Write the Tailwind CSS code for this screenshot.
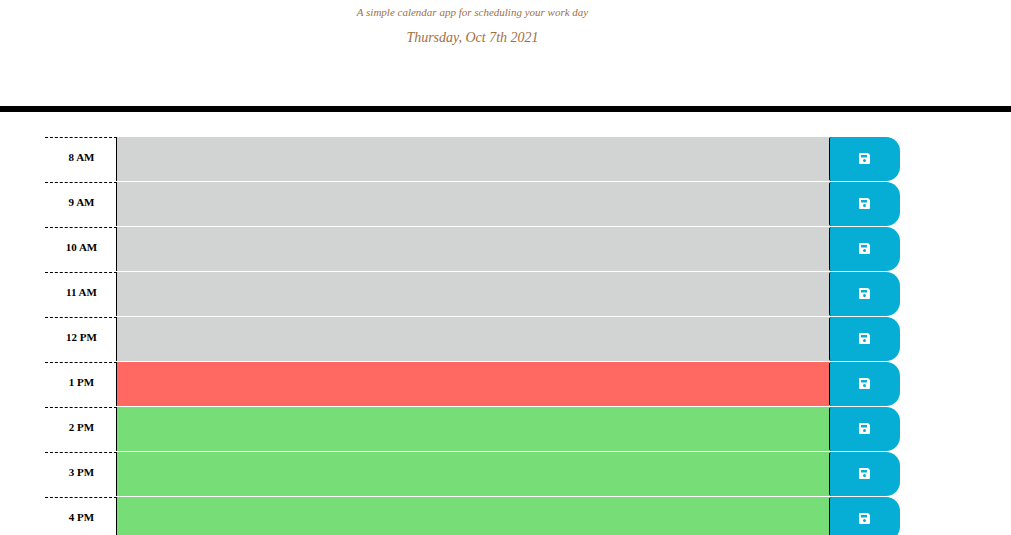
<!DOCTYPE html>
<html lang="en">
<head>
<meta charset="utf-8">
<meta name="viewport" content="width=device-width, initial-scale=1">
<title>Work Day Scheduler</title>
<script src="https://cdn.jsdelivr.net/npm/@tailwindcss/browser@4"></script>
</head>
<body class="h-screen overflow-hidden bg-white text-black">
<header class="h-28 border-b-6 border-black pr-[66px] text-center font-['Liberation_Serif',cursive] italic text-[#a0703f]">
  <p class="text-[11px] leading-6">A simple calendar app for scheduling your work day</p>
  <p class="text-[14px] leading-7">Thursday, Oct 7th 2021</p>
</header>
<main id="planner" class="mt-[25px] mr-[111px] ml-[45px] flex flex-col gap-px font-['Liberation_Serif',serif]"></main>
<template id="row">
  <div class="flex h-11">
    <label class="w-[72px] shrink-0 border-t border-r border-black [border-top-style:dashed] pt-[9px] pl-0.5 text-center text-[11px] leading-5 font-bold"></label>
    <textarea class="block min-w-0 flex-1 resize-none p-2 text-sm outline-none"></textarea>
    <button type="button" class="flex w-[71px] shrink-0 items-center justify-center rounded-l-xs rounded-r-[14px] border-l border-black bg-[#06aed5] pr-0.5 pb-0.5 text-white">
      <svg class="size-[11px]" viewBox="0 0 11 11" aria-hidden="true">
        <path fill="currentColor" fill-rule="evenodd" d="M1 0H9L11 2V10Q11 11 10 11H1Q0 11 0 10V1Q0 0 1 0ZM2 2V4.5H8V2ZM5.5 6A1.5 1.5 0 1 0 5.5 9A1.5 1.5 0 1 0 5.5 6Z"/>
      </svg>
    </button>
  </div>
</template>
<script>
  const hours = ['8 AM', '9 AM', '10 AM', '11 AM', '12 PM', '1 PM', '2 PM', '3 PM', '4 PM'];
  const current = 5;
  const planner = document.getElementById('planner');
  hours.forEach((hour, i) => {
    const row = document.getElementById('row').content.cloneNode(true);
    const label = row.querySelector('label');
    const field = row.querySelector('textarea');
    label.textContent = hour;
    label.htmlFor = field.id = 'hour-' + i;
    field.classList.add(i < current ? 'bg-[#d2d4d3]' : i === current ? 'bg-[#ff6961]' : 'bg-[#77dd77]');
    row.querySelector('button').setAttribute('aria-label', 'Save ' + hour);
    planner.append(row);
  });
</script>
</body>
</html>
